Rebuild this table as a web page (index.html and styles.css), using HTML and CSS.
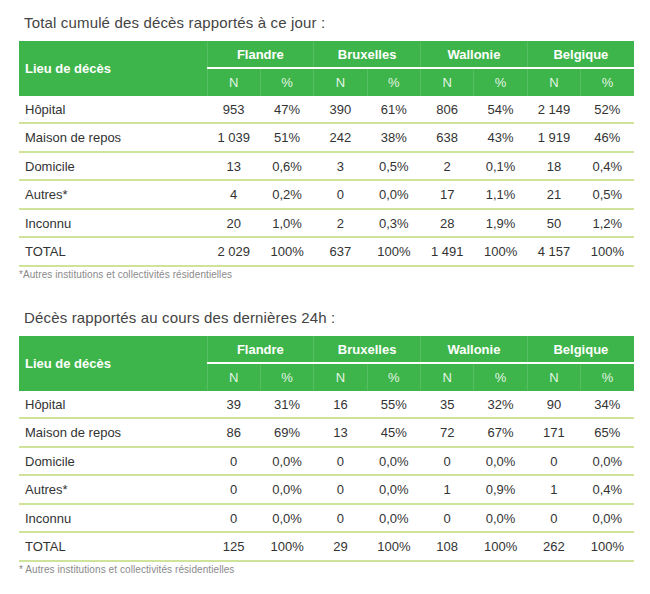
FILE: index.html
```html
<!DOCTYPE html>
<html lang="fr">
<head>
<meta charset="utf-8">
<title>Décès</title>
<link rel="stylesheet" href="styles.css">
</head>
<body>
<div class="page">
  <section class="block">
    <h2 class="title">Total cumulé des décès rapportés à ce jour :</h2>
    <table class="deaths">
      <colgroup><col class="c-lieu"><col span="8" class="c-val"></colgroup>
      <thead>
        <tr class="h1">
          <th rowspan="2" class="lieu">Lieu de décès</th>
          <th colspan="2" class="grp">Flandre</th>
          <th colspan="2" class="grp">Bruxelles</th>
          <th colspan="2" class="grp">Wallonie</th>
          <th colspan="2" class="grp">Belgique</th>
        </tr>
        <tr class="h2">
          <th>N</th><th>%</th><th>N</th><th>%</th><th>N</th><th>%</th><th>N</th><th>%</th>
        </tr>
      </thead>
      <tbody>
        <tr><td>Hôpital</td><td>953</td><td>47%</td><td>390</td><td>61%</td><td>806</td><td>54%</td><td>2 149</td><td>52%</td></tr>
        <tr><td>Maison de repos</td><td>1 039</td><td>51%</td><td>242</td><td>38%</td><td>638</td><td>43%</td><td>1 919</td><td>46%</td></tr>
        <tr><td>Domicile</td><td>13</td><td>0,6%</td><td>3</td><td>0,5%</td><td>2</td><td>0,1%</td><td>18</td><td>0,4%</td></tr>
        <tr><td>Autres*</td><td>4</td><td>0,2%</td><td>0</td><td>0,0%</td><td>17</td><td>1,1%</td><td>21</td><td>0,5%</td></tr>
        <tr><td>Inconnu</td><td>20</td><td>1,0%</td><td>2</td><td>0,3%</td><td>28</td><td>1,9%</td><td>50</td><td>1,2%</td></tr>
        <tr><td>TOTAL</td><td>2 029</td><td>100%</td><td>637</td><td>100%</td><td>1 491</td><td>100%</td><td>4 157</td><td>100%</td></tr>
      </tbody>
    </table>
    <p class="note">*Autres institutions et collectivités résidentielles</p>
  </section>

  <section class="block second">
    <h2 class="title">Décès rapportés au cours des dernières 24h :</h2>
    <table class="deaths">
      <colgroup><col class="c-lieu"><col span="8" class="c-val"></colgroup>
      <thead>
        <tr class="h1">
          <th rowspan="2" class="lieu">Lieu de décès</th>
          <th colspan="2" class="grp">Flandre</th>
          <th colspan="2" class="grp">Bruxelles</th>
          <th colspan="2" class="grp">Wallonie</th>
          <th colspan="2" class="grp">Belgique</th>
        </tr>
        <tr class="h2">
          <th>N</th><th>%</th><th>N</th><th>%</th><th>N</th><th>%</th><th>N</th><th>%</th>
        </tr>
      </thead>
      <tbody>
        <tr><td>Hôpital</td><td>39</td><td>31%</td><td>16</td><td>55%</td><td>35</td><td>32%</td><td>90</td><td>34%</td></tr>
        <tr><td>Maison de repos</td><td>86</td><td>69%</td><td>13</td><td>45%</td><td>72</td><td>67%</td><td>171</td><td>65%</td></tr>
        <tr><td>Domicile</td><td>0</td><td>0,0%</td><td>0</td><td>0,0%</td><td>0</td><td>0,0%</td><td>0</td><td>0,0%</td></tr>
        <tr><td>Autres*</td><td>0</td><td>0,0%</td><td>0</td><td>0,0%</td><td>1</td><td>0,9%</td><td>1</td><td>0,4%</td></tr>
        <tr><td>Inconnu</td><td>0</td><td>0,0%</td><td>0</td><td>0,0%</td><td>0</td><td>0,0%</td><td>0</td><td>0,0%</td></tr>
        <tr><td>TOTAL</td><td>125</td><td>100%</td><td>29</td><td>100%</td><td>108</td><td>100%</td><td>262</td><td>100%</td></tr>
      </tbody>
    </table>
    <p class="note">* Autres institutions et collectivités résidentielles</p>
  </section>
</div>
</body>
</html>
```

FILE: styles.css
```css
html, body {
  margin: 0;
  padding: 0;
  background: #ffffff;
}

body {
  font-family: "Liberation Sans", Arial, sans-serif;
  color: #333333;
}

.page {
  padding: 14px 0 0 19px;
  width: 615px;
}

.title {
  margin: 0 0 9px 5px;
  font-size: 15px;
  font-weight: normal;
  line-height: 18px;
  letter-spacing: 0.16px;
  color: #444444;
}

.second {
  margin-top: 28px;
}

.deaths {
  width: 615px;
  border-collapse: collapse;
  table-layout: fixed;
  font-size: 13px;
}

.c-lieu {
  width: 188px;
}

.deaths th {
  background: #3db54a;
  color: #ffffff;
  padding: 0;
  font-weight: bold;
  border-left: 1px solid rgba(255, 255, 255, 0.12);
}

.deaths th.lieu {
  text-align: left;
  padding-left: 6px;
  border-left: none;
}

.h1 th {
  height: 26px;
}

.h1 th.grp {
  border-bottom: 2px solid #ffffff;
}

.h2 th {
  height: 27px;
  font-weight: normal;
  color: rgba(255, 255, 255, 0.88);
}

.deaths td {
  height: 26px;
  padding: 0;
  text-align: center;
  border-bottom: 2px solid #cfe39a;
  color: #333333;
}

.deaths tbody tr:nth-child(even) td {
  height: 27px;
}

.deaths td:first-child {
  text-align: left;
  padding-left: 6px;
}

.note {
  margin: 2px 0 0 0;
  font-size: 10px;
  line-height: 12px;
  letter-spacing: 0.08px;
  color: #8a8a8a;
}
```
